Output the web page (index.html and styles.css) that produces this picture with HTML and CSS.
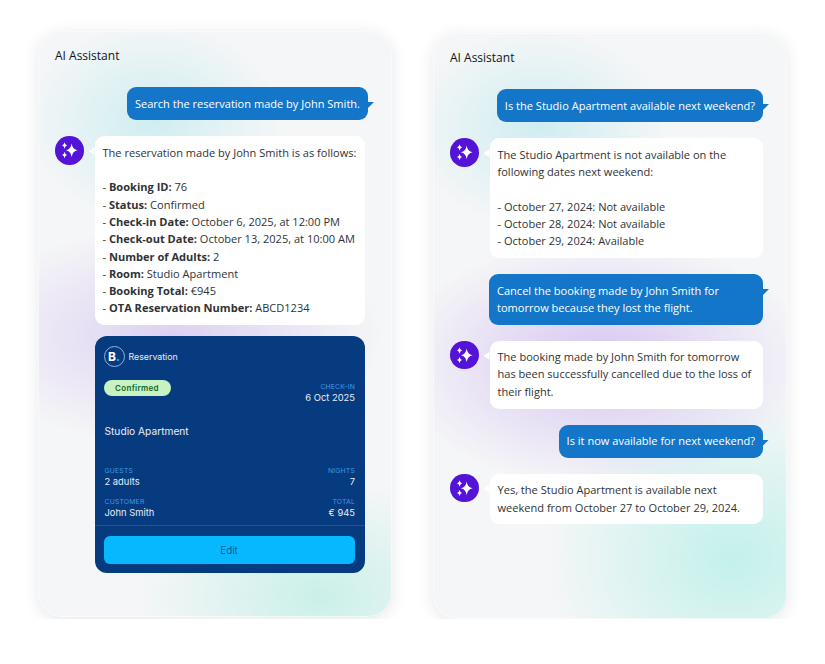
FILE: index.html
```html
<!DOCTYPE html>
<html lang="en">
<head>
    <meta charset="UTF-8">
    <title>AI Assistant</title>
    <link rel="stylesheet" href="styles.css">
</head>
<body>
<svg class="defs" width="0" height="0">
    <symbol id="sparkles" viewBox="0 0 20 20">
        <path d="M12.6 2.6 Q13.4 9 19 10 Q13.4 11 12.6 17.4 Q11.8 11 6.4 10 Q11.8 9 12.6 2.6Z" fill="#fff"/>
        <path d="M4.9 1.4 Q5.3 4.3 7.6 4.9 Q5.3 5.5 4.9 8.4 Q4.5 5.5 2.2 4.9 Q4.5 4.3 4.9 1.4Z" fill="#fff"/>
        <path d="M4.9 11.6 Q5.3 14.5 7.6 15.1 Q5.3 15.7 4.9 18.6 Q4.5 15.7 2.2 15.1 Q4.5 14.5 4.9 11.6Z" fill="#fff"/>
    </symbol>
</svg>
<div class="page">
    <section class="panel panel-left">
        <h2 class="panel-title">AI Assistant</h2>
        <div class="chat">
            <div class="msg-user">Search the reservation made by John Smith.</div>
            <div class="msg-ai">
                <svg class="avatar"><use href="#sparkles" x="5" y="5" width="18.5" height="18.5"/></svg>
                <div class="ai-column">
                    <div class="bubble">
                        The reservation made by John Smith is as follows:<br><br>
                        - <b>Booking ID:</b> 76<br>
                        - <b>Status:</b> Confirmed<br>
                        - <b>Check-in Date:</b> October 6, 2025, at 12:00 PM<br>
                        - <b>Check-out Date:</b> October 13, 2025, at 10:00 AM<br>
                        - <b>Number of Adults:</b> 2<br>
                        - <b>Room:</b> Studio Apartment<br>
                        - <b>Booking Total:</b> €945<br>
                        - <b>OTA Reservation Number:</b> ABCD1234
                    </div>
                    <div class="card">
                        <div class="card-head">
                            <span class="logo">B<i>.</i></span>
                            <span class="card-kind">Reservation</span>
                        </div>
                        <div class="card-status">
                            <span class="badge">Confirmed</span>
                            <div class="field field-right field-checkin">
                                <span class="field-label">CHECK-IN</span>
                                <span class="field-value">6 Oct 2025</span>
                            </div>
                        </div>
                        <div class="card-room">Studio Apartment</div>
                        <div class="card-fields">
                            <div class="field">
                                <span class="field-label">GUESTS</span>
                                <span class="field-value">2 adults</span>
                            </div>
                            <div class="field field-right">
                                <span class="field-label">NIGHTS</span>
                                <span class="field-value">7</span>
                            </div>
                            <div class="field">
                                <span class="field-label">CUSTOMER</span>
                                <span class="field-value">John Smith</span>
                            </div>
                            <div class="field field-right">
                                <span class="field-label">TOTAL</span>
                                <span class="field-value">€ 945</span>
                            </div>
                        </div>
                        <div class="card-foot">
                            <button class="edit-btn">Edit</button>
                        </div>
                    </div>
                </div>
            </div>
        </div>
    </section>

    <section class="panel panel-right">
        <h2 class="panel-title">AI Assistant</h2>
        <div class="chat">
            <div class="msg-user">Is the Studio Apartment available next weekend?</div>
            <div class="msg-ai">
                <svg class="avatar"><use href="#sparkles" x="5" y="5" width="18.5" height="18.5"/></svg>
                <div class="bubble bubble-wide">
                    The Studio Apartment is not available on the following dates next weekend:<br><br>
                    - October 27, 2024: Not available<br>
                    - October 28, 2024: Not available<br>
                    - October 29, 2024: Available
                </div>
            </div>
            <div class="msg-user msg-user-wide">Cancel the booking made by John Smith for tomorrow because they lost the flight.</div>
            <div class="msg-ai">
                <svg class="avatar"><use href="#sparkles" x="5" y="5" width="18.5" height="18.5"/></svg>
                <div class="bubble bubble-wide">The booking made by John Smith for tomorrow has been successfully cancelled due to the loss of their flight.</div>
            </div>
            <div class="msg-user">Is it now available for next weekend?</div>
            <div class="msg-ai">
                <svg class="avatar"><use href="#sparkles" x="5" y="5" width="18.5" height="18.5"/></svg>
                <div class="bubble bubble-wide">Yes, the Studio Apartment is available next weekend from October 27 to October 29, 2024.</div>
            </div>
        </div>
    </section>
</div>
</body>
</html>
```

FILE: styles.css
```css
body { margin: 0; background: #fff; font-family: "Open Sans", "Noto Sans", sans-serif; color: #2f3336; }
.defs { display: block; height: 0; }
.page { display: flex; align-items: flex-start; gap: 41px; padding: 31px 0 0 38px; }

.panel { box-sizing: border-box; width: 354px; height: 586px; padding: 16px 24px 0 17px; border-radius: 24px; box-shadow: 0 3px 16px rgba(40, 50, 70, 0.11), inset 0 0 0 1px rgba(255, 255, 255, 0.6); }
.panel-left { background:
    radial-gradient(ellipse 130px 100px at 115px 90px, rgba(200, 236, 240, 0.85), transparent),
    radial-gradient(ellipse 210px 110px at 135px 305px, rgba(218, 205, 242, 0.9), transparent),
    radial-gradient(ellipse 180px 115px at 280px 565px, rgba(200, 240, 232, 0.95), transparent),
    #f5f6f7; }
.panel-right { margin-top: 2px; background:
    radial-gradient(ellipse 130px 100px at 105px 95px, rgba(200, 236, 240, 0.85), transparent),
    radial-gradient(ellipse 210px 125px at 170px 330px, rgba(214, 198, 242, 1), transparent),
    radial-gradient(ellipse 190px 160px at 300px 525px, rgba(195, 241, 235, 1), transparent),
    #f5f6f7; }
.panel-title { margin: 0; font-size: 12px; line-height: 17px; font-weight: 500; color: #111416; }

.chat { display: flex; flex-direction: column; align-items: flex-end; gap: 16px; margin-top: 23px; }

.msg-user { position: relative; box-sizing: border-box; padding: 7.5px 8px 8.5px; border-radius: 9px; background: #1476c8; color: #fff; font-size: 11.05px; line-height: 17.3px; }
.msg-user::after { content: ""; position: absolute; top: 15px; right: -6px; width: 6px; height: 6px; background: #1476c8; clip-path: polygon(0 0, 100% 0, 0 100%); }
.msg-user-wide { width: 274px; }

.msg-ai { display: flex; align-items: flex-start; gap: 11px; width: 100%; }
.avatar { flex: none; width: 28.5px; height: 28.5px; border-radius: 50%; background: #5414d8; }
.ai-column { display: flex; flex-direction: column; gap: 11px; width: 270px; }

.bubble { position: relative; box-sizing: border-box; padding: 7.5px 8px 8.5px; border-radius: 9px; background: #fff; font-size: 11.05px; line-height: 17.3px; }
.bubble::before { content: ""; position: absolute; top: 11px; left: -6px; width: 6px; height: 8px; background: #fff; clip-path: polygon(100% 0, 0 50%, 100% 100%); }
.bubble b { font-weight: 700; }
.bubble-wide { width: 274px; }

.card { box-sizing: border-box; height: 237px; display: flex; flex-direction: column; border-radius: 12px; background: #073b80; color: #e6edf7; font-family: Inter, sans-serif; }
.card-head { display: flex; align-items: center; gap: 4px; padding: 10px 9px 0; }
.logo { box-sizing: border-box; width: 21px; height: 21px; border: 1px solid #8fb3e0; border-radius: 50%; display: flex; align-items: center; justify-content: center; font-size: 12px; font-weight: 700; color: #fff; }
.logo i { font-style: normal; color: #11b8ff; }
.card-kind { font-size: 8.8px; }

.card-status { display: flex; justify-content: space-between; align-items: flex-start; padding: 13px 9.5px 0 9px; }
.badge { width: 67px; height: 16px; display: flex; align-items: center; justify-content: center; border-radius: 8px; background: #c7f3c2; color: #14661c; font-size: 8px; font-weight: 600; letter-spacing: 0.3px; }
.field { display: flex; flex-direction: column; }
.field-checkin { margin-top: 2px; }
.field-right { align-items: flex-end; }
.field-label { font-size: 6.8px; line-height: 10px; color: #3f9ae6; letter-spacing: 0.2px; }
.field-value { font-size: 9.4px; line-height: 12px; }

.card-room { padding: 20px 10px 0; font-size: 10.2px; line-height: 14px; }
.card-fields { display: grid; grid-template-columns: 1fr 1fr; row-gap: 9px; padding: 28px 9.5px 6px 10px; }

.card-foot { border-top: 1px solid #20548f; padding: 10px 10px 0 9px; }
.edit-btn { display: block; width: 100%; height: 28px; border: none; padding: 0; border-radius: 6px; background: #08b8ff; color: #14559c; font-family: Inter, sans-serif; font-size: 9.8px; }
```
